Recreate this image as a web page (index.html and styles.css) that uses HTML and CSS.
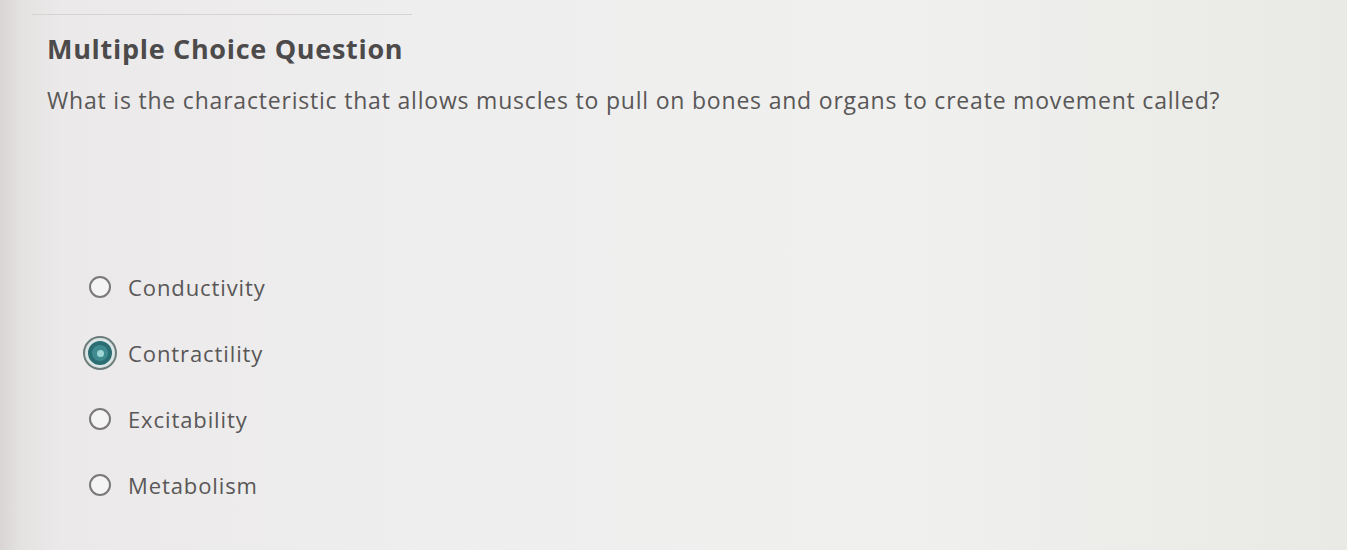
FILE: index.html
```html
<!DOCTYPE html>
<html>
<head>
<meta charset="utf-8">
<link rel="stylesheet" href="styles.css">
</head>
<body>
<div class="page">
  <div class="topline"></div>
  <h1 class="title">Multiple Choice Question</h1>
  <p class="question">What is the characteristic that allows muscles to pull on bones and organs to create movement called?</p>
  <ul class="options">
    <li class="option"><span class="radio"></span><span class="label">Conductivity</span></li>
    <li class="option"><span class="radio selected"><span class="dot"></span></span><span class="label">Contractility</span></li>
    <li class="option"><span class="radio"></span><span class="label">Excitability</span></li>
    <li class="option"><span class="radio"></span><span class="label">Metabolism</span></li>
  </ul>
</div>
</body>
</html>
```
FILE: styles.css
```css
html, body {
  margin: 0;
  padding: 0;
}
body {
  width: 1347px;
  height: 550px;
  overflow: hidden;
  font-family: "Open Sans", "Lato", sans-serif;
  background: linear-gradient(90deg, #d9d5d5 0px, #e4e1e1 20px, #ebe9e9 60px, #efeeee 400px, #f0f0ef 900px, #e9e9e5 1347px);
}
.page {
  padding: 0 0 0 47px;
  display: flex;
  flex-direction: column;
}
.topline {
  height: 1px;
  width: 380px;
  margin: 14px 0 0 -15px;
  background: #d6d3d3;
}
.title {
  margin: 14px 0 0 0;
  font-size: 27px;
  font-weight: 700;
  letter-spacing: 0.7px;
  color: #4c4a4a;
  line-height: 40px;
}
.question {
  margin: 16px 0 0 0;
  font-size: 23px;
  font-weight: 400;
  letter-spacing: 0.8px;
  color: #595757;
  line-height: 30px;
}
.options {
  list-style: none;
  margin: 158px 0 0 42px;
  padding: 0;
  display: flex;
  flex-direction: column;
  gap: 38px;
}
.option {
  display: flex;
  align-items: center;
  gap: 17px;
  height: 28px;
}
.radio {
  box-sizing: border-box;
  width: 22px;
  height: 22px;
  border: 2px solid #7a7878;
  border-radius: 50%;
  background: #f4f4f4;
  display: flex;
  align-items: center;
  justify-content: center;
}
.radio.selected {
  width: 24px;
  height: 24px;
  margin-left: -1px;
  margin-right: -1px;
  border: 4px solid #2a6d72;
  background: #3f8b90;
  box-shadow: 0 0 0 3px #d9e6e5, 0 0 0 5px #6d7b7b;
}
.dot {
  width: 7px;
  height: 7px;
  border-radius: 50%;
  background: #9fd6d6;
}
.label {
  font-size: 22px;
  letter-spacing: 0.9px;
  color: #595757;
}
```
